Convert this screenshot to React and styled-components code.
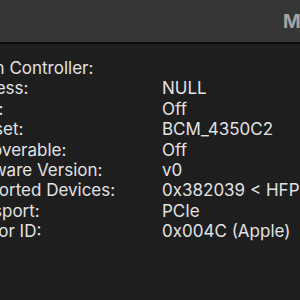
import React from "react";
import styled, { createGlobalStyle } from "styled-components";

const Global = createGlobalStyle`
  html, body { margin: 0; padding: 0; background: #1e1e1e; }
  #root { width: 300px; height: 300px; overflow: hidden; }
`;

const Window = styled.div`
  width: 300px;
  height: 300px;
  overflow: hidden;
  background: #1e1e1e;
  font-family: Inter, "Liberation Sans", sans-serif;
`;

const TitleBar = styled.div`
  height: 42px;
  background: #363636;
  border-bottom: 2px solid #0b0b0b;
  display: flex;
  align-items: center;
  overflow: hidden;
`;

const Title = styled.div`
  padding-left: 283px;
  font-size: 19px;
  font-weight: 700;
  color: #a3a3a3;
  white-space: nowrap;
`;

const Content = styled.div`
  padding-top: 14px;
  margin-left: -72px;
  color: #e2e2e2;
  font-size: 17px;
  line-height: 20.4px;
  white-space: nowrap;
`;

const Heading = styled.div``;

const Grid = styled.div`
  display: grid;
  grid-template-columns: 205px auto;
  padding-left: 29px;
`;

const Label = styled.div``;
const Value = styled.div``;

const rows = [
  ["Address:", "NULL"],
  ["State:", "Off"],
  ["Chipset:", "BCM_4350C2"],
  ["Discoverable:", "Off"],
  ["Firmware Version:", "v0"],
  ["Supported Devices:", "0x382039 < HFP AVRCP A2DP HID Braille AACP GATT SerialPort >"],
  ["Transport:", "PCIe"],
  ["Vendor ID:", "0x004C (Apple)"],
];

export default function App() {
  return (
    <Window>
      <Global />
      <TitleBar>
        <Title>MacBook Pro</Title>
      </TitleBar>
      <Content>
        <Heading>Bluetooth Controller:</Heading>
        <Grid>
          {rows.map(([l, v]) => (
            <React.Fragment key={l}>
              <Label>{l}</Label>
              <Value>{v}</Value>
            </React.Fragment>
          ))}
        </Grid>
      </Content>
    </Window>
  );
}
